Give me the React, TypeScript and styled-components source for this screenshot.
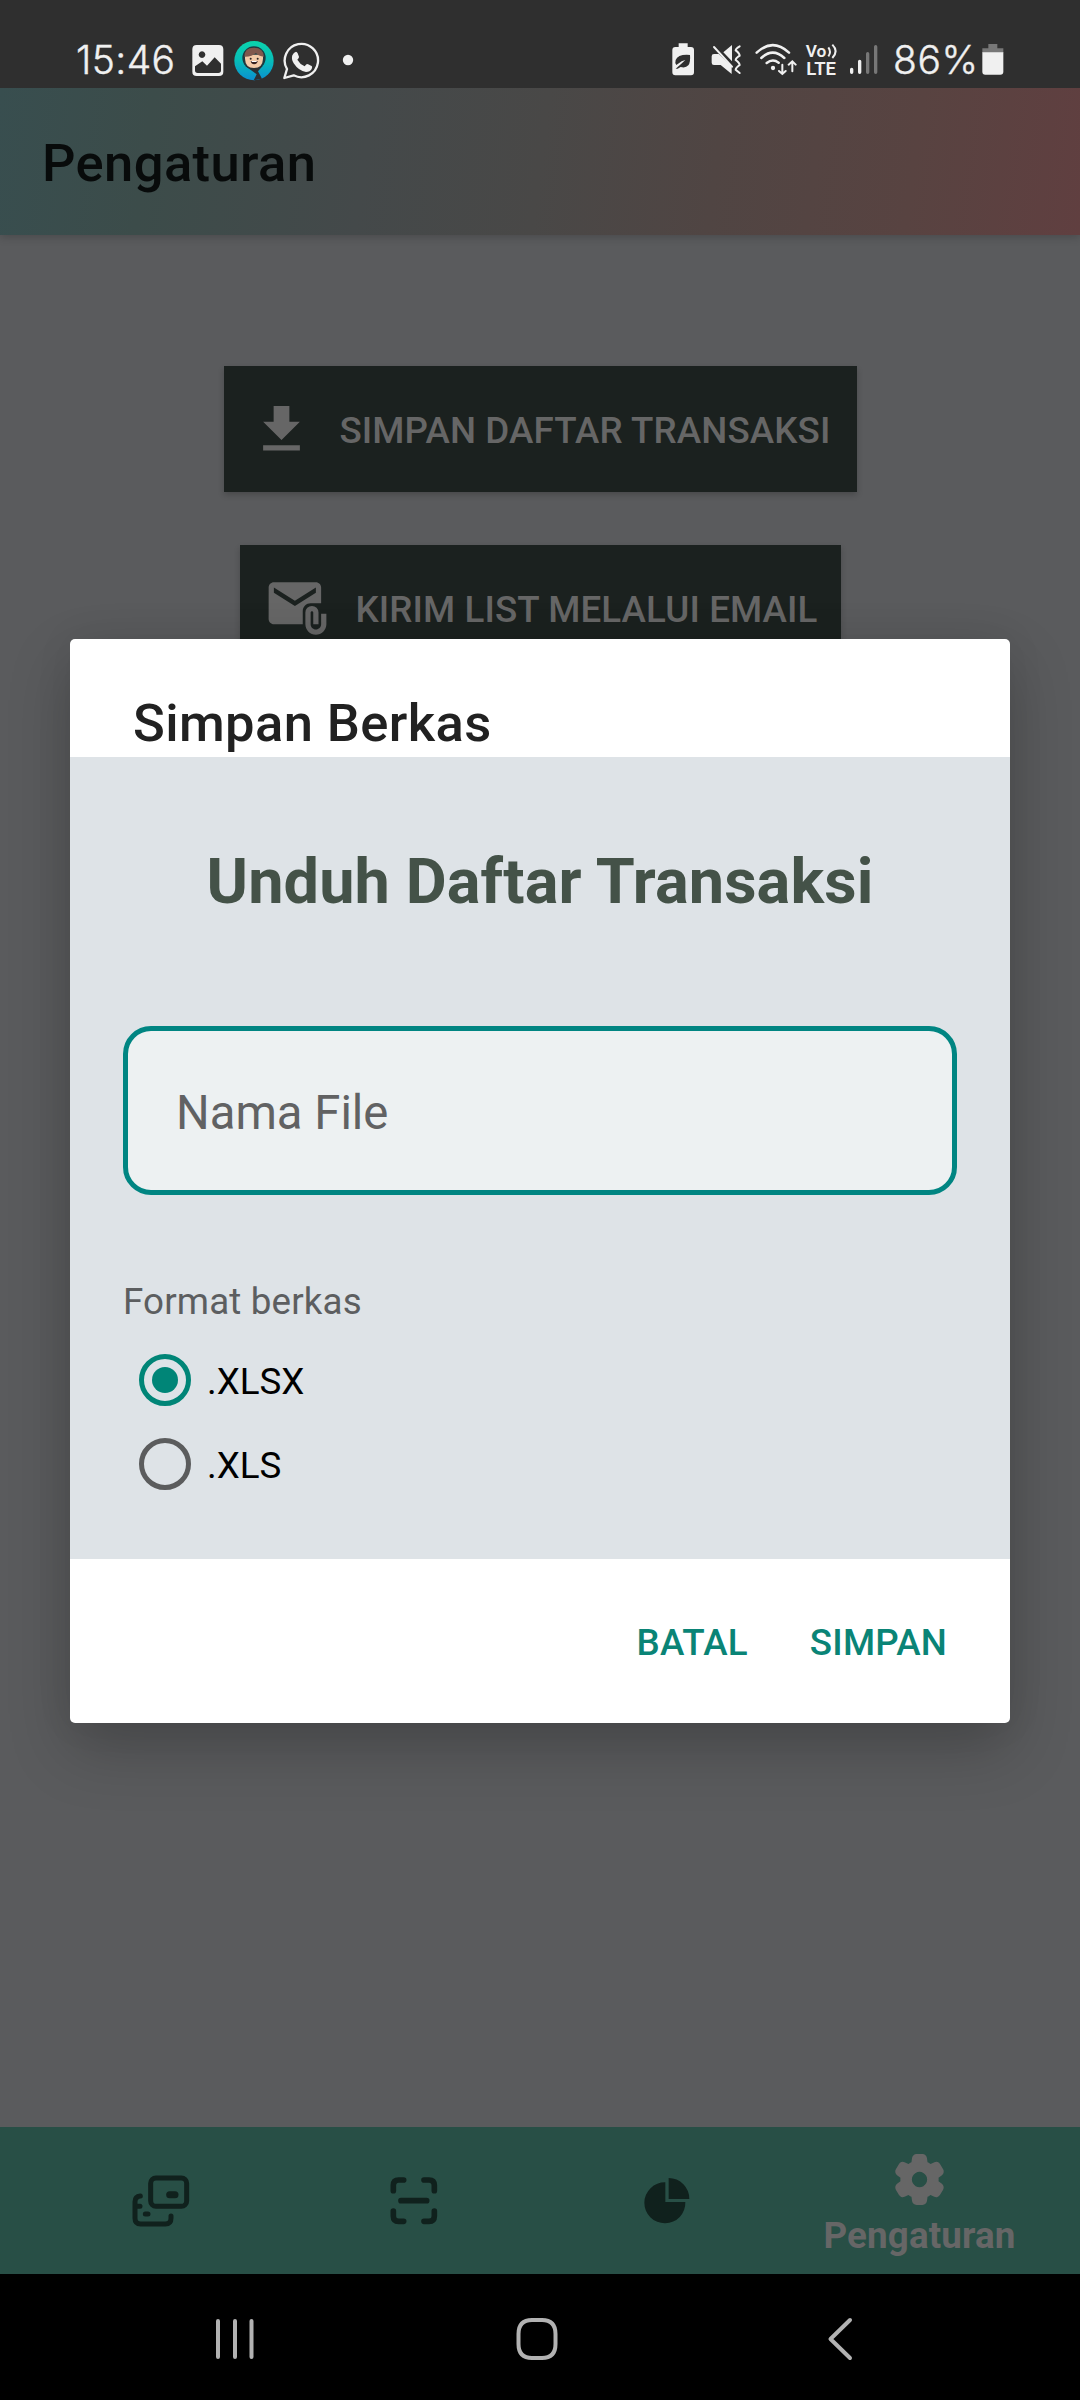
import React from "react";
import styled, { createGlobalStyle, css } from "styled-components";

const GlobalStyle = createGlobalStyle`
  * { box-sizing: border-box; }
  body { margin: 0; background: #5a5b5d; font-family: Roboto, "Liberation Sans", sans-serif; }
  svg { display: block; flex: none; }
  button, input { font: inherit; border: 0; margin: 0; }
`;

const Screen = styled.div`
  position: relative;
  display: flex;
  flex-direction: column;
  width: 1080px;
  height: 2400px;
  overflow: hidden;
  background: #5a5b5d;
`;

/* ---------- status bar ---------- */
const StatusBar = styled.header`
  display: flex;
  justify-content: space-between;
  height: 88px;
  padding: 41px 76px 0 76px;
  background: #2f2f2f;
  position: relative;
  z-index: 1;
`;
const StatusGroup = styled.div`
  display: flex;
  align-items: flex-start;
  height: 40px;
`;
const StatusText = styled.span<{ $width: number; $gap: number; $track: number }>`
  width: ${(p) => p.$width}px;
  margin-right: ${(p) => p.$gap}px;
  font: 300 39px/37px Inter, Roboto, sans-serif;
  letter-spacing: ${(p) => p.$track}px;
  white-space: nowrap;
  color: #f0f0f0;
  -webkit-text-stroke: 0.4px #f0f0f0;
`;
const Glyph = styled.svg<{ $gap?: number }>`
  margin-right: ${(p) => p.$gap ?? 0}px;
`;

/* ---------- app bar ---------- */
const AppBar = styled.div`
  display: flex;
  align-items: center;
  height: 147px;
  padding: 3px 42px 0;
  background: linear-gradient(97.7deg, #384e4f 0%, #3c4c4a 14%, #44494a 34%, #494847 50%, #504543 66%, #584341 84%, #603f40 100%);
  box-shadow: 0 2px 9px rgba(0, 0, 0, 0.2);
`;
const AppTitle = styled.h1`
  margin: 0;
  font-size: 52.5px;
  letter-spacing: 0.4px;
  font-weight: 500;
  color: #080b0b;
`;

/* ---------- page ---------- */
const Content = styled.main`
  flex: 1;
  display: flex;
  flex-direction: column;
  align-items: center;
  gap: 53px;
  padding-top: 131px;
`;
const ActionButton = styled.button<{ $width: number }>`
  display: flex;
  align-items: center;
  gap: 27px;
  width: ${(p) => p.$width}px;
  height: 126px;
  padding: 0 0 0 26px;
  background: #1b211f;
  color: #666;
  box-shadow: 0 3px 6px rgba(0, 0, 0, 0.2);
`;
const ActionLabel = styled.span`
  padding-top: 4px;
  font-size: 36.75px;
  letter-spacing: 0.1px;
  line-height: 44px;
  font-weight: 500;
  white-space: nowrap;
`;

/* ---------- tabs ---------- */
const TabBar = styled.nav`
  display: flex;
  height: 147px;
  padding-left: 34px;
  background: #284f46;
`;
const Tab = styled.a<{ $active?: boolean }>`
  display: flex;
  flex-direction: column;
  align-items: center;
  width: 253px;
  ${(p) =>
    p.$active
      ? css`padding-top: 27px; color: #666;`
      : css`padding-top: 48px; color: #10211d;`}
`;
const TabLabel = styled.span`
  margin-top: 9px;
  font-size: 36.75px;
  letter-spacing: 0.15px;
  line-height: 44px;
  font-weight: 700;
`;

const SystemNav = styled.footer`
  display: flex;
  align-items: flex-start;
  height: 126px;
  padding: 43px 0 0 214px;
  background: #000;
`;

/* ---------- dialog ---------- */
const Overlay = styled.div`
  position: absolute;
  inset: 0;
  display: flex;
  justify-content: center;
  align-items: flex-start;
  padding-top: 639px;
`;
const Dialog = styled.section`
  display: flex;
  flex-direction: column;
  width: 940px;
  height: 1084px;
  border-radius: 5px;
  overflow: hidden;
  background: #fff;
  box-shadow: 0 26px 62px rgba(0, 0, 0, 0.21), 0 0 40px rgba(0, 0, 0, 0.06);
`;
const DialogTitle = styled.h2`
  height: 118px;
  margin: 0;
  padding: 53px 63px 0;
  font-size: 52.5px;
  letter-spacing: 0.4px;
  line-height: 62px;
  font-weight: 500;
  color: #212121;
`;
const DialogBody = styled.div`
  display: flex;
  flex-direction: column;
  height: 802px;
  padding: 88px 53px 0;
  background: #dee3e7;
`;
const Heading = styled.h3`
  margin: 0 0 107px;
  text-align: center;
  font-size: 63px;
  letter-spacing: 0.1px;
  line-height: 74px;
  font-weight: 700;
  color: #445248;
`;
const FileInput = styled.input`
  width: 834px;
  height: 169px;
  padding: 5px 48px 0;
  border: 5px solid #008582;
  border-radius: 28px;
  background: #edf1f2;
  font-size: 47.25px;
  outline: 0;
  &::placeholder { color: #616263; opacity: 1; }
`;
const GroupLabel = styled.span`
  margin: 85px 0 14px;
  font-size: 36.75px;
  letter-spacing: 0.15px;
  line-height: 44px;
  color: #5c5e60;
`;
const Option = styled.label`
  display: flex;
  align-items: center;
  gap: 16px;
  height: 84px;
  padding-left: 16px;
  font-size: 36.75px;
  color: #000;
`;
const RadioMark = styled.span<{ $on?: boolean }>`
  width: 52px;
  height: 52px;
  display: grid;
  place-items: center;
  border-radius: 50%;
  border: 5px solid ${(p) => (p.$on ? "#008577" : "#5b5c5d")};
  &::after {
    content: "";
    width: 26px;
    height: 26px;
    border-radius: 50%;
    background: ${(p) => (p.$on ? "#008577" : "transparent")};
  }
`;
const OptionText = styled.span`
  padding-top: 2px;
`;
const DialogActions = styled.div`
  display: flex;
  justify-content: flex-end;
  gap: 62px;
  padding: 62px 63px 0 0;
`;
const TextButton = styled.button`
  padding: 0;
  background: none;
  font-size: 36.75px;
  letter-spacing: 0.2px;
  line-height: 44px;
  font-weight: 500;
  color: #0a8476;
`;

/* ---------- icons ---------- */
const PhotoIcon = () => (
  <Glyph width="32" height="40" viewBox="425 63 96 120" $gap={10}>
    <path fill="#f0f0f0" fillRule="evenodd" d="M439 75h67q13 0 13 13v67q0 13-13 13h-67q-13 0-13-13v-67q0-13 13-13ZM455 94a10 10 0 1 0 .1 0ZM434 139v12q0 8 8 8h62q8 0 8-8v-20l-19-19-23 25-14-13Z" />
  </Glyph>
);
const AvatarIcon = () => (
  <Glyph width="40" height="40" viewBox="554 63 120 120" $gap={9}>
    <defs>
      <linearGradient id="pin" x1="0" y1="0" x2="0" y2="1">
        <stop offset="0" stopColor="#0bd3ab" />
        <stop offset="0.5" stopColor="#08bdb9" />
        <stop offset="1" stopColor="#0a8fd0" />
      </linearGradient>
    </defs>
    <circle cx="614" cy="122" r="59" fill="url(#pin)" />
    <circle cx="614" cy="114" r="35" fill="#1d3a40" />
    <path d="M588 138l34 25-9 18 25-5-12-22 14-16Z" fill="#2b3034" />
    <path d="M587 104h54v12q-1 28-27 28-26 0-27-28Z" fill="#f3caa8" />
    <path d="M585 110q0-27 28-27 29 0 31 27-17-1-24-11-13 12-35 11Z" fill="#80584d" />
    <circle cx="604" cy="116" r="3" fill="#2c2526" />
    <circle cx="625" cy="116" r="3" fill="#2c2526" />
    <path d="M604 123h21q-2 10-10.500 10t-10.500-10Z" fill="#352020" />
    <path d="M607 123h15v3h-15Z" fill="#fff" />
  </Glyph>
);
const WhatsAppIcon = () => (
  <Glyph width="37" height="40" viewBox="699 63 111 120" $gap={22}>
    <path d="M703 174l8-27a50 50 0 1 1 20 19Z" fill="none" stroke="#f0f0f0" strokeWidth="7" strokeLinejoin="round" />
    <path d="M738 95q3 0 5 5l4 10q1 3-5 9 8 14 22 20 5-7 8-7 2 0 13 6 3 2 0 9-5 9-17 9-22-3-37-26-8-12-4-24 4-9 11-11Z" fill="#f0f0f0" />
  </Glyph>
);
const MoreDot = () => (
  <Glyph width="12" height="40" viewBox="876 63 36 120">
    <circle cx="894" cy="120" r="15.5" fill="#f0f0f0" />
  </Glyph>
);
const SaverIcon = () => (
  <Glyph width="23" height="40" viewBox="68 63 69 120" $gap={16}>
    <path d="M88 70h27v11h10q9 0 9 9v67q0 9-9 9H78q-9 0-9-9V90q0-9 9-9h10Z" fill="#f0f0f0" />
    <path d="M122 105q-36-3-43 15-3 9 2 15l16-11 11-4-12 11-17 15h6l9-5q15 4 23-5 7-9 5-31Z" fill="#2f2f2f" />
  </Glyph>
);
const MuteIcon = () => (
  <Glyph width="31" height="40" viewBox="185 63 93 120" $gap={13}>
    <path d="M187 109q0-7 7-7h14l39 37v23l-33-27h-20q-7 0-7-7ZM222 97l26-22v49Z" fill="#f0f0f0" />
    <path d="M194 81l54 59M271 79q-12 7-12 12 12 9 12 16-12 8-12 13 12 9 12 15-12 9-12 14l12 10" fill="none" stroke="#f0f0f0" strokeWidth="6" strokeLinecap="round" />
  </Glyph>
);
const WifiIcon = () => (
  <Glyph width="42" height="40" viewBox="315 63 126 120" $gap={8}>
    <g fill="none" stroke="#f0f0f0" strokeWidth="7.5" strokeLinecap="round">
      <path d="M320 98q48-45 97 0M334 114q34-32 69 0M350 129q18-14 36-1" />
      <path d="M397 134v26M387 153l10 9 10-9M427 154v-28M416 134l11-10 10 10" strokeWidth="6" />
    </g>
    <circle cx="369" cy="144" r="6.5" fill="#f0f0f0" />
  </Glyph>
);
const VolteIcon = () => (
  <Glyph width="34" height="40" viewBox="465 63 102 120" $gap={10}>
    <g fill="#f0f0f0" fontFamily="Roboto, sans-serif" fontWeight="600">
      <text x="467" y="111" fontSize="49" textLength="62" lengthAdjust="spacingAndGlyphs">Vo</text>
      <text x="469" y="165" fontSize="53" textLength="89" lengthAdjust="spacingAndGlyphs">LTE</text>
    </g>
    <path d="M535 82q10 14 0 27M547 74q20 20 0 40" fill="none" stroke="#f0f0f0" strokeWidth="6" />
  </Glyph>
);
const SignalIcon = () => (
  <Glyph width="30" height="40" viewBox="598 63 90 120" $gap={14}>
    <g strokeWidth="10" strokeLinecap="round">
      <path d="M606 148v9M630 124v33" stroke="#f0f0f0" />
      <path d="M654 101v56M678 80v77" stroke="#777" />
    </g>
  </Glyph>
);
const BatteryIcon = () => (
  <Glyph width="22" height="40" viewBox="998 63 66 120">
    <path d="M1017 72h27v13h18v14h-63V85h18Z" fill="#777" />
    <path d="M999 97h63v58q0 9-9 9h-45q-9 0-9-9Z" fill="#f0f0f0" />
  </Glyph>
);
const DownloadIcon = () => (
  <svg width="63" height="63" viewBox="0 0 24 24" fill="currentColor">
    <path d="M19 9h-4V3H9v6H5l7 7 7-7zM5 18v2h14v-2H5z" />
  </svg>
);
const AttachEmailIcon = () => (
  <svg width="63" height="63" viewBox="0 0 24 24" fill="currentColor">
    <path d="M21 10V4c0-1.1-.9-2-2-2H3c-1.1 0-1.99.9-1.99 2L1 16c0 1.1.9 2 2 2h11v-5c0-1.66 1.34-3 3-3h4zm-10 1L3 6V4l8 5 8-5v2l-8 5z" />
    <path d="M21 14v4c0 1.1-.9 2-2 2s-2-.9-2-2v-4.5c0-.28.22-.5.5-.5s.5.22.5.5V18h2v-4.5a2.5 2.5 0 0 0-5 0V18c0 2.21 1.79 4 4 4s4-1.79 4-4v-4h-2z" />
  </svg>
);
const CardsIcon = () => (
  <svg width="58" height="53" viewBox="95 193 174 159" fill="none" stroke="currentColor" strokeWidth="15" strokeLinecap="round">
    <rect x="151" y="202" width="108" height="85" rx="16" />
    <path d="M120 256q-16 2-16 17v50q0 17 17 17h74q17 0 17-17v-7M104 287h15M135 310h8" />
    <path d="M208 252h16" strokeWidth="21" />
  </svg>
);
const ScanIcon = () => (
  <svg width="50" height="50" viewBox="866 194 150 150" fill="none" stroke="currentColor" strokeWidth="17" strokeLinecap="round">
    <path d="M879 241v-16q0-16 16-16h15M971 209h15q16 0 16 16v16M1002 302v15q0 16-16 16h-15M910 333h-15q-16 0-16-16v-15M902 271h77" />
  </svg>
);
const PieIcon = () => (
  <svg width="50" height="50" viewBox="125 194 150 150" fill="currentColor">
    <path d="M195 216v59h60a61.500 61.500 0 1 1-60-59ZM205 203a62 62 0 0 1 62 63h-62Z" />
  </svg>
);
const GearIcon = () => (
  <svg width="51" height="51" viewBox="2 2 20 20" fill="currentColor" fillRule="evenodd">
    <path d="M10.825 22q-.675 0-1.162-.45t-.588-1.1L8.85 18.8q-.325-.125-.612-.3t-.563-.375l-1.55.65q-.625.275-1.25.05t-.975-.8l-1.175-2.05q-.35-.575-.2-1.225t.675-1.075l1.325-1Q4.5 12.500 4.500 12.337v-.675q0-.162.025-.337l-1.325-1Q2.675 9.900 2.525 9.250t.2-1.225L3.900 5.975q.35-.575.975-.8t1.250.05l1.550.65q.275-.2.575-.375t.6-.3l.225-1.650q.1-.65.588-1.100T10.825 2h2.350q.675 0 1.163.45t.587 1.100l.225 1.650q.325.125.613.3t.562.375l1.550-.65q.625-.275 1.250-.05t.975.8l1.175 2.050q.35.575.2 1.225t-.675 1.075l-1.325 1q.025.175.025.338v.674q0 .163-.05.338l1.325 1q.525.425.675 1.075t-.2 1.225l-1.200 2.050q-.35.575-.975.8t-1.250-.05l-1.500-.65q-.275.2-.575.375t-.6.3l-.225 1.650q-.1.65-.587 1.100t-1.163.45zM12 9a3 3 0 1 0 .01 0Z" />
  </svg>
);
const RecentsIcon = () => (
  <Glyph width="42" height="44" viewBox="0 0 42 44" $gap={259} stroke="#b2b2b2" strokeWidth="4" strokeLinecap="round">
    <path d="M4 4v36M21 4v36M37.500 4v36" />
  </Glyph>
);
const HomeIcon = () => (
  <Glyph width="44" height="44" viewBox="0 0 44 44" $gap={267} fill="none" stroke="#b2b2b2" strokeWidth="4">
    <path d="M22 3h5q13.500 0 13.500 14v10q0 14-13.500 14H17Q3.500 41 3.500 27V17Q3.500 3 17 3Z" />
  </Glyph>
);
const BackIcon = () => (
  <Glyph width="30" height="44" viewBox="0 0 30 44" fill="none" stroke="#b2b2b2" strokeWidth="4" strokeLinecap="round" strokeLinejoin="round">
    <path d="M24 3L4.500 22 24 41" />
  </Glyph>
);

export default function App() {
  return (
    <>
      <GlobalStyle />
      <Screen>
        <StatusBar>
          <StatusGroup>
            <StatusText $width={99} $gap={17} $track={0.4}>15:46</StatusText>
            <PhotoIcon />
            <AvatarIcon />
            <WhatsAppIcon />
            <MoreDot />
          </StatusGroup>
          <StatusGroup>
            <SaverIcon />
            <MuteIcon />
            <WifiIcon />
            <VolteIcon />
            <SignalIcon />
            <StatusText $width={86} $gap={3} $track={0.6}>86%</StatusText>
            <BatteryIcon />
          </StatusGroup>
        </StatusBar>
        <AppBar>
          <AppTitle>Pengaturan</AppTitle>
        </AppBar>
        <Content>
          <ActionButton $width={633}>
            <DownloadIcon />
            <ActionLabel>SIMPAN DAFTAR TRANSAKSI</ActionLabel>
          </ActionButton>
          <ActionButton $width={601}>
            <AttachEmailIcon />
            <ActionLabel>KIRIM LIST MELALUI EMAIL</ActionLabel>
          </ActionButton>
        </Content>
        <TabBar>
          <Tab><CardsIcon /></Tab>
          <Tab><ScanIcon /></Tab>
          <Tab><PieIcon /></Tab>
          <Tab $active>
            <GearIcon />
            <TabLabel>Pengaturan</TabLabel>
          </Tab>
        </TabBar>
        <SystemNav>
          <RecentsIcon />
          <HomeIcon />
          <BackIcon />
        </SystemNav>
        <Overlay>
          <Dialog role="dialog">
            <DialogTitle>Simpan Berkas</DialogTitle>
            <DialogBody>
              <Heading>Unduh Daftar Transaksi</Heading>
              <FileInput placeholder="Nama File" />
              <GroupLabel>Format berkas</GroupLabel>
              <Option><RadioMark $on /><OptionText>.XLSX</OptionText></Option>
              <Option><RadioMark /><OptionText>.XLS</OptionText></Option>
            </DialogBody>
            <DialogActions>
              <TextButton>BATAL</TextButton>
              <TextButton>SIMPAN</TextButton>
            </DialogActions>
          </Dialog>
        </Overlay>
      </Screen>
    </>
  );
}
